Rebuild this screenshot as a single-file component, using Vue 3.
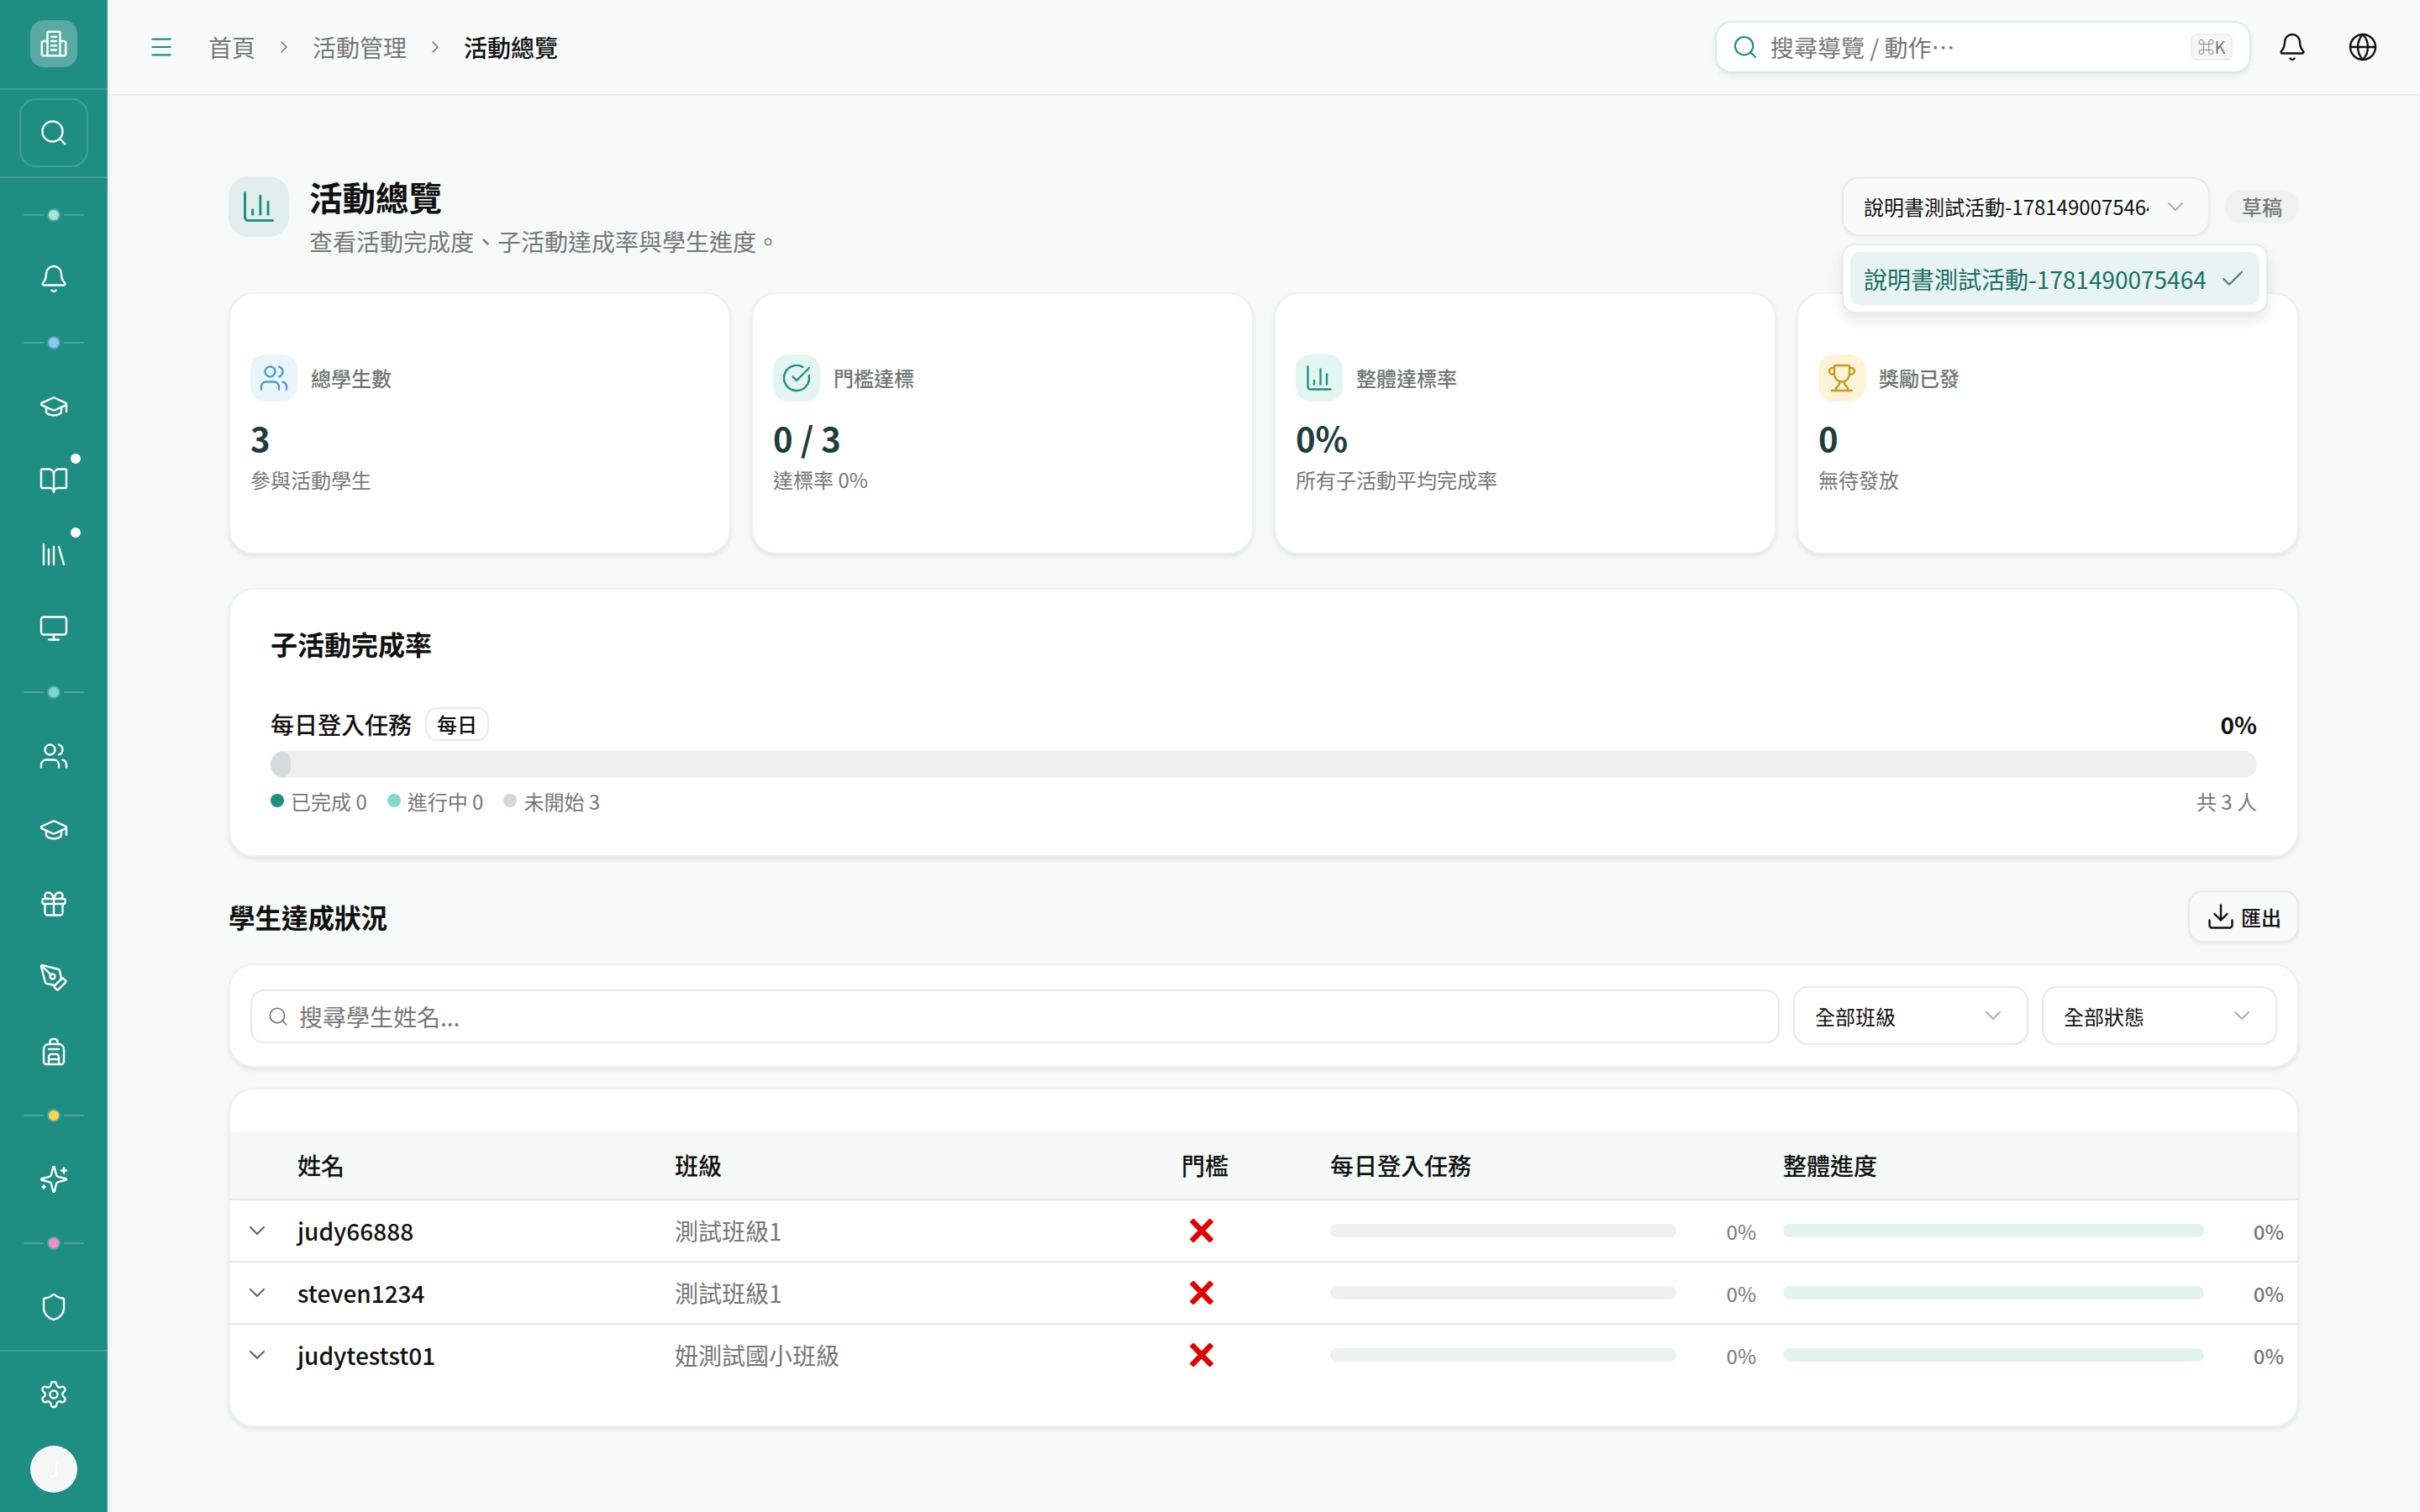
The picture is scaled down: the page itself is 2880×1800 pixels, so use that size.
<template>
  <div class="layout">
    <aside class="sidebar">
      <div class="side-logo">
        <div class="logo-box"><Icon name="logo" class="side-icon" /></div>
      </div>
      <div class="side-search">
        <div class="search-box"><Icon name="search" class="side-icon" /></div>
      </div>
      <nav class="side-nav">
        <template v-for="(item, i) in navItems" :key="i">
          <div v-if="item.sep" class="nav-sep">
            <span class="sep-line"></span>
            <span class="sep-dot" :style="{ background: item.sep }"></span>
            <span class="sep-line"></span>
          </div>
          <div v-else class="nav-item">
            <Icon :name="item.icon" class="side-icon" />
            <span v-if="item.dot" class="nav-badge"></span>
          </div>
        </template>
      </nav>
      <div class="side-foot">
        <div class="nav-gear"><Icon name="settings" class="side-icon" /></div>
        <div class="avatar">J</div>
      </div>
    </aside>

    <div class="main">
      <header class="topbar">
        <Icon name="menu" class="menu-icon" />
        <div class="crumbs">
          <span>首頁</span>
          <Icon name="chevronRight" class="crumb-sep" />
          <span>活動管理</span>
          <Icon name="chevronRight" class="crumb-sep" />
          <span class="crumb-now">活動總覽</span>
        </div>
        <div class="top-search">
          <Icon name="search" class="top-search-icon" />
          <span class="top-search-text">搜尋導覽 / 動作⋯</span>
          <kbd class="kbd">⌘K</kbd>
        </div>
        <Icon name="bell" class="top-icon top-bell" />
        <Icon name="globe" class="top-icon top-globe" />
      </header>

      <main class="content">
        <section class="page-head">
          <div class="head-left">
            <div class="head-icon"><Icon name="chart" class="head-chart" /></div>
            <div>
              <h1 class="page-title">活動總覽</h1>
              <p class="page-sub">查看活動完成度、子活動達成率與學生進度。</p>
            </div>
          </div>
          <div class="head-right">
            <div class="activity-select">
              <span class="activity-value">說明書測試活動-1781490075464</span>
              <Icon name="chevronDown" class="chev" />
              <div class="dropdown">
                <div class="dropdown-item">
                  <span>說明書測試活動-1781490075464</span>
                  <Icon name="check" class="check-icon" />
                </div>
              </div>
            </div>
            <span class="draft-tag">草稿</span>
          </div>
        </section>

        <section class="stats">
          <div v-for="s in stats" :key="s.label" class="stat-card">
            <div class="stat-top">
              <div class="stat-icon" :class="s.tone"><Icon :name="s.icon" class="stat-svg" /></div>
              <span class="stat-label">{{ s.label }}</span>
            </div>
            <div class="stat-value">{{ s.value }}</div>
            <div class="stat-sub">{{ s.sub }}</div>
          </div>
        </section>

        <section class="card rate-card">
          <h2 class="card-title">子活動完成率</h2>
          <div class="task-row">
            <div class="task-name">
              <span>每日登入任務</span>
              <span class="task-badge">每日</span>
            </div>
            <span class="task-pct">0%</span>
          </div>
          <div class="task-track"><div class="task-fill"></div></div>
          <div class="task-legend">
            <div class="legend-items">
              <span v-for="l in legend" :key="l.text" class="legend-item">
                <i class="legend-dot" :style="{ background: l.color }"></i>{{ l.text }}
              </span>
            </div>
            <span>共 3 人</span>
          </div>
        </section>

        <div class="students-head">
          <h2 class="students-title">學生達成狀況</h2>
          <button class="export-btn"><Icon name="download" class="export-icon" />匯出</button>
        </div>

        <section class="card filter-card">
          <div class="filter-input">
            <Icon name="search" class="filter-search" />
            <span>搜尋學生姓名...</span>
          </div>
          <div class="filter-select"><span>全部班級</span><Icon name="chevronDown" class="chev" /></div>
          <div class="filter-select"><span>全部狀態</span><Icon name="chevronDown" class="chev" /></div>
        </section>

        <section class="card table-card">
          <table class="student-table">
            <colgroup>
              <col class="col-a" /><col class="col-b" /><col class="col-c" />
              <col class="col-d" /><col class="col-e" /><col />
            </colgroup>
            <thead>
              <tr>
                <th></th>
                <th>姓名</th>
                <th>班級</th>
                <th>門檻</th>
                <th>每日登入任務</th>
                <th>整體進度</th>
              </tr>
            </thead>
            <tbody>
              <tr v-for="st in students" :key="st.name">
                <td class="cell-chev"><Icon name="chevronDown" class="row-chev" /></td>
                <td class="cell-name">{{ st.name }}</td>
                <td class="cell-class">{{ st.cls }}</td>
                <td>
                  <svg class="fail-x" viewBox="0 0 30 28">
                    <path d="M3 1.5 27 26.5M27 1.5 3 26.5" />
                  </svg>
                </td>
                <td>
                  <div class="mini-progress daily">
                    <div class="mini-bar"></div>
                    <span class="mini-pct">0%</span>
                  </div>
                </td>
                <td>
                  <div class="mini-progress overall">
                    <div class="mini-bar"></div>
                    <span class="mini-pct">0%</span>
                  </div>
                </td>
              </tr>
            </tbody>
          </table>
        </section>
      </main>
    </div>
  </div>
</template>

<script setup>
import { h } from 'vue'

const icons = {
  logo: [
    'M7 3.5a1 1 0 0 1 1-1h8a1 1 0 0 1 1 1v17a1 1 0 0 1-1 1H8a1 1 0 0 1-1-1z',
    'M10 6.5h4', 'M10 10h4', 'M10 13.5h4', 'M10 17h4',
    'M7 10H4a1.5 1.5 0 0 0-1.5 1.5V20A1.5 1.5 0 0 0 4 21.5h3',
    'M17 10h3a1.5 1.5 0 0 1 1.5 1.5V20a1.5 1.5 0 0 1-1.5 1.5h-3'
  ],
  search: ['M19 11a8 8 0 1 1-16 0 8 8 0 0 1 16 0z', 'm21 21-4.3-4.3'],
  bell: [
    'M10.268 21a2 2 0 0 0 3.464 0',
    'M3.262 15.326A1 1 0 0 0 4 17h16a1 1 0 0 0 .74-1.673C19.41 13.956 18 12.499 18 8A6 6 0 0 0 6 8c0 4.499-1.411 5.956-2.738 7.326'
  ],
  cap: [
    'M21.42 10.922a1 1 0 0 0-.019-1.838L12.83 5.18a2 2 0 0 0-1.66 0L2.6 9.08a1 1 0 0 0 0 1.832l8.57 3.908a2 2 0 0 0 1.66 0z',
    'M22 10v6',
    'M6 12.5V16a6 3 0 0 0 12 0v-3.5'
  ],
  book: [
    'M12 7v14',
    'M3 18a1 1 0 0 1-1-1V4a1 1 0 0 1 1-1h5a4 4 0 0 1 4 4 4 4 0 0 1 4-4h5a1 1 0 0 1 1 1v13a1 1 0 0 1-1 1h-6a3 3 0 0 0-3 3 3 3 0 0 0-3-3z'
  ],
  library: ['m16 6 4 14', 'M12 6v14', 'M8 8v12', 'M4 4v16'],
  monitor: ['M4 3h16a2 2 0 0 1 2 2v10a2 2 0 0 1-2 2H4a2 2 0 0 1-2-2V5a2 2 0 0 1 2-2z', 'M8 21h8', 'M12 17v4'],
  users: [
    'M16 21v-2a4 4 0 0 0-4-4H6a4 4 0 0 0-4 4v2',
    'M13 7a4 4 0 1 1-8 0 4 4 0 0 1 8 0z',
    'M22 21v-2a4 4 0 0 0-3-3.87',
    'M16 3.13a4 4 0 0 1 0 7.75'
  ],
  gift: [
    'M4 8h16a1 1 0 0 1 1 1v2a1 1 0 0 1-1 1H4a1 1 0 0 1-1-1V9a1 1 0 0 1 1-1z',
    'M12 8v13',
    'M19 12v7a2 2 0 0 1-2 2H7a2 2 0 0 1-2-2v-7',
    'M7.5 8a2.5 2.5 0 0 1 0-5A4.8 8 0 0 1 12 8a4.8 8 0 0 1 4.5-5 2.5 2.5 0 0 1 0 5'
  ],
  pen: [
    'M15.707 21.293a1 1 0 0 1-1.414 0l-1.586-1.586a1 1 0 0 1 0-1.414l5.586-5.586a1 1 0 0 1 1.414 0l1.586 1.586a1 1 0 0 1 0 1.414z',
    'm18 13-1.375-6.874a1 1 0 0 0-.746-.776L3.235 2.028a1 1 0 0 0-1.207 1.207L5.35 15.879a1 1 0 0 0 .776.746L13 18',
    'm2.3 2.3 7.286 7.286',
    'M13 11a2 2 0 1 1-4 0 2 2 0 0 1 4 0z'
  ],
  backpack: [
    'M4 10a4 4 0 0 1 4-4h8a4 4 0 0 1 4 4v10a2 2 0 0 1-2 2H6a2 2 0 0 1-2-2z',
    'M8 10h8', 'M8 18h8',
    'M8 22v-6a2 2 0 0 1 2-2h4a2 2 0 0 1 2 2v6',
    'M9 6V4a2 2 0 0 1 2-2h2a2 2 0 0 1 2 2v2'
  ],
  sparkles: [
    'M9.937 15.5A2 2 0 0 0 8.5 14.063l-6.135-1.582a.5.5 0 0 1 0-.962L8.5 9.936A2 2 0 0 0 9.937 8.5l1.582-6.135a.5.5 0 0 1 .963 0L14.063 8.5A2 2 0 0 0 15.5 9.937l6.135 1.581a.5.5 0 0 1 0 .964L15.5 14.063a2 2 0 0 0-1.437 1.437l-1.582 6.135a.5.5 0 0 1-.963 0z',
    'M20 3v4', 'M22 5h-4', 'M4 17v2', 'M5 18H3'
  ],
  shield: [
    'M20 13c0 5-3.5 7.5-7.66 8.95a1 1 0 0 1-.67-.01C7.5 20.5 4 18 4 13V6a1 1 0 0 1 1-1c2 0 4.5-1.2 6.24-2.72a1.17 1.17 0 0 1 1.52 0C14.51 3.81 17 5 19 5a1 1 0 0 1 1 1z'
  ],
  settings: [
    'M12.22 2h-.44a2 2 0 0 0-2 2v.18a2 2 0 0 1-1 1.73l-.43.25a2 2 0 0 1-2 0l-.15-.08a2 2 0 0 0-2.73.73l-.22.38a2 2 0 0 0 .73 2.73l.15.1a2 2 0 0 1 1 1.72v.51a2 2 0 0 1-1 1.74l-.15.09a2 2 0 0 0-.73 2.73l.22.38a2 2 0 0 0 2.73.73l.15-.08a2 2 0 0 1 2 0l.43.25a2 2 0 0 1 1 1.73V20a2 2 0 0 0 2 2h.44a2 2 0 0 0 2-2v-.18a2 2 0 0 1 1-1.73l.43-.25a2 2 0 0 1 2 0l.15.08a2 2 0 0 0 2.73-.73l.22-.39a2 2 0 0 0-.73-2.73l-.15-.08a2 2 0 0 1-1-1.74v-.5a2 2 0 0 1 1-1.74l.15-.09a2 2 0 0 0 .73-2.73l-.22-.38a2 2 0 0 0-2.73-.73l-.15.08a2 2 0 0 1-2 0l-.43-.25a2 2 0 0 1-1-1.73V4a2 2 0 0 0-2-2z',
    'M15 12a3 3 0 1 1-6 0 3 3 0 0 1 6 0z'
  ],
  globe: [
    'M22 12a10 10 0 1 1-20 0 10 10 0 0 1 20 0z',
    'M12 2a14.5 14.5 0 0 0 0 20 14.5 14.5 0 0 0 0-20',
    'M2 12h20'
  ],
  chart: ['M3 3v16a2 2 0 0 0 2 2h16', 'M18 17V9', 'M13 17V5', 'M8 17v-3'],
  circleCheck: ['M21.801 10A10 10 0 1 1 17 3.335', 'm9 11 3 3L22 4'],
  trophy: [
    'M10 14.66v1.626a2 2 0 0 1-.976 1.696A5 5 0 0 0 7 21.978',
    'M14 14.66v1.626a2 2 0 0 0 .976 1.696A5 5 0 0 1 17 21.978',
    'M18 9h1.5a1 1 0 0 0 0-5H18',
    'M4 22h16',
    'M6 9a6 6 0 0 0 12 0V3a1 1 0 0 0-1-1H7a1 1 0 0 0-1 1z',
    'M6 9H4.5a1 1 0 0 1 0-5H6'
  ],
  download: ['M12 15V3', 'M21 15v4a2 2 0 0 1-2 2H5a2 2 0 0 1-2-2v-4', 'm7 10 5 5 5-5'],
  chevronDown: ['m6 9 6 6 6-6'],
  chevronRight: ['m9 18 6-6-6-6'],
  check: ['M20 6 9 17l-5-5'],
  menu: ['M4 5h16', 'M4 12h16', 'M4 19h16']
}

const Icon = (props) =>
  h(
    'svg',
    {
      viewBox: '0 0 24 24',
      fill: 'none',
      stroke: 'currentColor',
      'stroke-width': 1.6,
      'stroke-linecap': 'round',
      'stroke-linejoin': 'round'
    },
    icons[props.name].map((d) => h('path', { d }))
  )
Icon.props = ['name']

const navItems = [
  { sep: '#a7e6d7' },
  { icon: 'bell' },
  { sep: '#93c5fd' },
  { icon: 'cap' },
  { icon: 'book', dot: true },
  { icon: 'library', dot: true },
  { icon: 'monitor' },
  { sep: '#7fd6cc' },
  { icon: 'users' },
  { icon: 'cap' },
  { icon: 'gift' },
  { icon: 'pen' },
  { icon: 'backpack' },
  { sep: '#fcd34d' },
  { icon: 'sparkles' },
  { sep: '#f48cc8' },
  { icon: 'shield' }
]

const stats = [
  { label: '總學生數', value: '3', sub: '參與活動學生', icon: 'users', tone: 'blue' },
  { label: '門檻達標', value: '0 / 3', sub: '達標率 0%', icon: 'circleCheck', tone: 'teal' },
  { label: '整體達標率', value: '0%', sub: '所有子活動平均完成率', icon: 'chart', tone: 'teal' },
  { label: '獎勵已發', value: '0', sub: '無待發放', icon: 'trophy', tone: 'amber' }
]

const legend = [
  { text: '已完成 0', color: '#1f8f83' },
  { text: '進行中 0', color: '#84d8d0' },
  { text: '未開始 3', color: '#d2d8d7' }
]

const students = [
  { name: 'judy66888', cls: '測試班級1' },
  { name: 'steven1234', cls: '測試班級1' },
  { name: 'judytestst01', cls: '妞測試國小班級' }
]
</script>

<style scoped>
.layout {
  display: flex;
  min-height: 1800px;
}

/* sidebar */
.sidebar {
  width: 128px;
  height: 1800px;
  flex-shrink: 0;
  box-sizing: border-box;
  display: flex;
  flex-direction: column;
  background: #1e8d82;
  box-shadow: inset -2px 0 0 #28978a;
  color: #fff;
}

.side-icon {
  width: 36px;
  height: 36px;
  display: block;
}

.side-logo {
  height: 107px;
  box-sizing: border-box;
  padding-top: 24px;
  display: flex;
  justify-content: center;
  border-bottom: 2px solid rgba(255, 255, 255, 0.14);
}

.logo-box {
  width: 56px;
  height: 56px;
  border-radius: 16px;
  background: rgba(255, 255, 255, 0.26);
  display: flex;
  align-items: center;
  justify-content: center;
}

.side-search {
  padding: 10px 0 11px;
  display: flex;
  justify-content: center;
  border-bottom: 2px solid rgba(255, 255, 255, 0.14);
}

.search-box {
  width: 82px;
  height: 82px;
  box-sizing: border-box;
  border: 2px solid rgba(255, 255, 255, 0.16);
  border-radius: 20px;
  display: flex;
  align-items: center;
  justify-content: center;
}

.side-nav {
  padding-top: 12px;
  display: flex;
  flex-direction: column;
}

.nav-sep {
  height: 64px;
  display: flex;
  align-items: center;
  justify-content: center;
  gap: 6px;
}

.sep-line {
  width: 24px;
  height: 2px;
  background: rgba(255, 255, 255, 0.2);
}

.sep-dot {
  width: 12px;
  height: 12px;
  border-radius: 50%;
  box-shadow: 0 0 0 2px rgba(255, 255, 255, 0.22);
}

.nav-item {
  position: relative;
  height: 88px;
  display: flex;
  align-items: center;
  justify-content: center;
}

.nav-badge {
  position: absolute;
  top: 12px;
  left: 84px;
  width: 12px;
  height: 12px;
  border-radius: 50%;
  background: #fff;
}

.side-foot {
  margin-top: auto;
  height: 193px;
  box-sizing: border-box;
  border-top: 2px solid rgba(255, 255, 255, 0.14);
  display: flex;
  flex-direction: column;
  align-items: center;
  padding-top: 33px;
}

.avatar {
  margin-top: 43px;
  width: 56px;
  height: 56px;
  border-radius: 50%;
  background: #f5f6f6;
  color: #fff;
  font-size: 24px;
  line-height: 56px;
  text-align: center;
}

/* topbar */
.main {
  flex: 1;
  min-width: 0;
}

.topbar {
  height: 114px;
  box-sizing: border-box;
  display: flex;
  align-items: center;
  padding-left: 48px;
  background: #f7fbfa;
  border-bottom: 2px solid #e6ecea;
}

.menu-icon {
  width: 32px;
  height: 32px;
  color: #1f8f83;
  flex-shrink: 0;
}

.crumbs {
  margin-left: 40px;
  display: flex;
  align-items: center;
  gap: 22px;
  font-size: 28px;
  color: #777;
}

.crumb-sep {
  width: 24px;
  height: 24px;
  color: #777;
}

.crumb-now {
  color: #111;
  font-weight: 500;
}

.top-search {
  margin-left: auto;
  width: 638px;
  height: 62px;
  box-sizing: border-box;
  display: flex;
  align-items: center;
  padding: 0 20px 0 18px;
  background: #fff;
  border: 2px solid #d8ece7;
  border-radius: 20px;
  box-shadow: 0 3px 6px rgba(30, 90, 80, 0.1);
}

.top-search-icon {
  width: 32px;
  height: 32px;
  color: #1f8f83;
  flex-shrink: 0;
}

.top-search-text {
  margin-left: 14px;
  font-size: 28px;
  color: #777;
}

.kbd {
  margin-left: auto;
  width: 50px;
  height: 32px;
  box-sizing: border-box;
  border: 2px solid #eaeeec;
  border-radius: 8px;
  background: #f6f7f5;
  font-family: inherit;
  font-size: 20px;
  line-height: 28px;
  text-align: center;
  color: #777;
}

.top-icon {
  width: 36px;
  height: 36px;
  color: #111;
  flex-shrink: 0;
}

.top-bell {
  margin-left: 31px;
}

.top-globe {
  margin-left: 48px;
  margin-right: 50px;
}

/* content */
.content {
  padding: 96px 144px 76px;
}

.page-head {
  display: flex;
  justify-content: space-between;
  align-items: flex-start;
  margin-bottom: 42px;
}

.head-left {
  display: flex;
  gap: 24px;
}

.head-icon {
  width: 72px;
  height: 72px;
  border-radius: 24px;
  background: #e1eeec;
  display: flex;
  align-items: center;
  justify-content: center;
}

.head-chart {
  width: 44px;
  height: 44px;
  color: #1f8f83;
}

.page-title {
  margin: 0;
  font-size: 39.5px;
  line-height: 48px;
  font-weight: 700;
  color: #111;
}

.page-sub {
  margin: 10px 0 0;
  font-size: 28px;
  line-height: 38px;
  color: #777;
}

.head-right {
  display: flex;
  align-items: center;
  gap: 18px;
  height: 72px;
}

.activity-select {
  position: relative;
  width: 438px;
  height: 70px;
  box-sizing: border-box;
  display: flex;
  align-items: center;
  padding: 0 23px 0 24px;
  border: 2px solid #e6ecea;
  border-radius: 20px;
  background: #f8fbfa;
  box-shadow: 0 2px 4px rgba(0, 0, 0, 0.04);
  gap: 16px;
}

.activity-value {
  flex: 1;
  min-width: 0;
  overflow: hidden;
  white-space: nowrap;
  padding-bottom: 2px;
  font-size: 24px;
  color: #111;
}

.chev {
  width: 32px;
  height: 32px;
  color: #aeb3b2;
  flex-shrink: 0;
}

.dropdown {
  position: absolute;
  top: 77px;
  left: -2px;
  width: 507px;
  height: 83px;
  box-sizing: border-box;
  padding: 8px;
  background: #fff;
  border: 2px solid #e6ecea;
  border-radius: 16px;
  box-shadow: 0 8px 16px rgba(0, 0, 0, 0.1);
  z-index: 5;
}

.dropdown-item {
  height: 63px;
  box-sizing: border-box;
  padding: 0 16px;
  display: flex;
  align-items: center;
  justify-content: space-between;
  border-radius: 12px;
  background: #e7f4f1;
  color: #1a6f65;
  font-size: 28px;
  white-space: nowrap;
}

.check-icon {
  width: 32px;
  height: 32px;
  color: #5f7471;
}

.draft-tag {
  width: 88px;
  height: 40px;
  border-radius: 20px;
  background: #eef2f1;
  font-size: 24px;
  line-height: 40px;
  text-align: center;
  font-weight: 500;
  color: #777;
}

.stats {
  display: grid;
  grid-template-columns: repeat(4, 1fr);
  gap: 24px;
  margin-bottom: 40px;
}

.stat-card,
.card {
  box-sizing: border-box;
  background: #fff;
  border: 2px solid #edf1f0;
  border-radius: 30px;
  box-shadow: 0 3px 5px rgba(0, 0, 0, 0.08);
}

.stat-card {
  height: 312px;
  padding: 0 24px;
  display: flex;
  flex-direction: column;
  justify-content: center;
}

.stat-top {
  display: flex;
  align-items: center;
  gap: 16px;
}

.stat-icon {
  width: 56px;
  height: 56px;
  border-radius: 18px;
  display: flex;
  align-items: center;
  justify-content: center;
}

.stat-icon.blue {
  background: #e9f4fb;
  color: #4c9bc9;
}

.stat-icon.teal {
  background: #e3f5f1;
  color: #1f8f83;
}

.stat-icon.amber {
  background: #fdf4d8;
  color: #c99a1e;
}

.stat-svg {
  width: 36px;
  height: 36px;
}

.stat-label {
  font-size: 24px;
  font-weight: 500;
  color: #6f7675;
}

.stat-value {
  margin-top: 17px;
  font-size: 40px;
  line-height: 52px;
  font-weight: 700;
  color: #1f3d3a;
}

.stat-sub {
  margin-top: 8px;
  font-size: 24px;
  line-height: 32px;
  color: #777;
}

/* completion card */
.rate-card {
  padding: 42px 48px 48px;
  margin-bottom: 40px;
}

.card-title {
  margin: 0 0 54px;
  font-size: 32px;
  line-height: 44px;
  font-weight: 700;
  color: #111;
}

.task-row {
  height: 40px;
  display: flex;
  align-items: center;
  justify-content: space-between;
}

.task-name {
  display: flex;
  align-items: center;
  gap: 16px;
  font-size: 28px;
  font-weight: 500;
  color: #111;
}

.task-badge {
  height: 40px;
  box-sizing: border-box;
  padding: 0 12px;
  border: 2px solid #e6eaea;
  border-radius: 14px;
  font-size: 24px;
  line-height: 36px;
  color: #111;
}

.task-pct {
  font-size: 28px;
  font-weight: 700;
  color: #111;
}

.task-track {
  margin-top: 12px;
  height: 32px;
  border-radius: 16px;
  background: #ecf1f0;
  overflow: hidden;
}

.task-fill {
  width: 24px;
  height: 100%;
  border-radius: 12px;
  background: #d5dcdb;
}

.task-legend {
  margin-top: 12px;
  margin-bottom: 2px;
  height: 30px;
  display: flex;
  align-items: center;
  justify-content: space-between;
  font-size: 24px;
  color: #777;
}

.legend-items {
  display: flex;
  gap: 24px;
}

.legend-item {
  display: flex;
  align-items: center;
  gap: 8px;
}

.legend-dot {
  width: 16px;
  height: 16px;
  border-radius: 50%;
}

/* students */
.students-head {
  display: flex;
  align-items: center;
  justify-content: space-between;
  margin-bottom: 25px;
}

.students-title {
  margin: 0;
  font-size: 31.5px;
  font-weight: 700;
  color: #111;
}

.export-btn {
  width: 132px;
  height: 62px;
  display: flex;
  align-items: center;
  justify-content: center;
  gap: 6px;
  padding: 0;
  background: #f6faf9;
  border: 2px solid #e6ecea;
  border-radius: 18px;
  box-shadow: 0 2px 4px rgba(0, 0, 0, 0.05);
  font-family: inherit;
  font-size: 24px;
  font-weight: 500;
  color: #111;
}

.export-icon {
  width: 36px;
  height: 36px;
}

.filter-card {
  padding: 25px 24px;
  display: flex;
  align-items: center;
  gap: 16px;
  margin-bottom: 24px;
}

.filter-input {
  flex: 1;
  height: 64px;
  margin-top: 2px;
  box-sizing: border-box;
  display: flex;
  align-items: center;
  padding: 0 16px 0 18px;
  gap: 12px;
  border: 2px solid #e6eaea;
  border-radius: 16px;
  font-size: 28px;
  color: #777;
}

.filter-search {
  width: 26px;
  height: 26px;
  color: #777;
}

.filter-select {
  width: 280px;
  height: 70px;
  box-sizing: border-box;
  display: flex;
  align-items: center;
  justify-content: space-between;
  padding: 0 24px;
  border: 2px solid #e6eaea;
  border-radius: 18px;
  box-shadow: 0 2px 4px rgba(0, 0, 0, 0.04);
  font-size: 24px;
  color: #111;
}

/* table */
.table-card {
  padding: 50px 0 48px;
}

.student-table {
  width: 100%;
  table-layout: fixed;
  border-collapse: collapse;
}

.col-a { width: 80px; }
.col-b { width: 449px; }
.col-c { width: 603px; }
.col-d { width: 177px; }
.col-e { width: 539px; }

.student-table th {
  height: 80px;
  padding: 0;
  background: #f4f8f7;
  border-bottom: 2px solid #e6e9e9;
  text-align: left;
  font-size: 28px;
  font-weight: 500;
  color: #111;
}

.student-table td {
  height: 72px;
  padding: 0;
  border-bottom: 2px solid #e6e9e9;
  font-size: 28px;
}

.student-table tr:last-child td {
  border-bottom: none;
}

.cell-chev {
  padding-left: 16px !important;
}

.row-chev {
  display: block;
  width: 32px;
  height: 32px;
  color: #666;
}

.cell-name {
  font-weight: 500;
  color: #111;
}

.cell-class {
  color: #777;
}

.fail-x {
  display: block;
  width: 30px;
  height: 28px;
  margin-left: 9px;
  fill: none;
  stroke: #e00000;
  stroke-width: 6.5;
}

.mini-progress {
  display: flex;
  align-items: center;
}

.mini-progress.daily {
  width: 507px;
}

.mini-progress.overall {
  width: 596px;
}

.mini-bar {
  flex: 1;
  height: 16px;
  border-radius: 8px;
  background: #edf1f0;
}

.overall .mini-bar {
  background: #e3f4ef;
}

.mini-pct {
  width: 95px;
  text-align: right;
  font-size: 24px;
  color: #777;
}

.overall .mini-pct {
  font-weight: 500;
}
</style>

<style>
body {
  margin: 0;
  background: #f5f9f8;
  font-family: "Noto Sans CJK TC", "Noto Sans", sans-serif;
}
</style>
